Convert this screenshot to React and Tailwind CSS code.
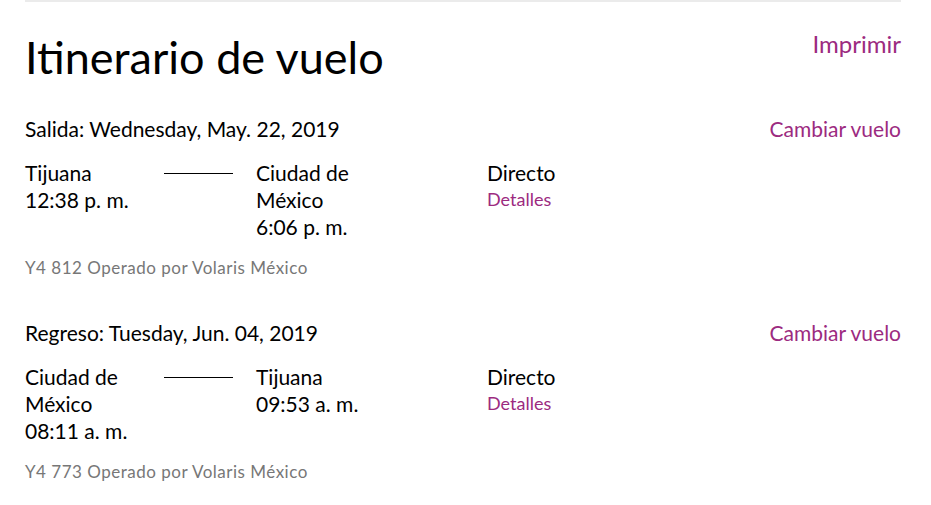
import React from "react";

function Leg({ label, date, from, fromTime, to, toTime, code }) {
  return (
    <div>
      <div className="flex items-baseline justify-between">
        <div className="text-[21px] leading-[27px] text-black">
          {label}: {date}
        </div>
        <a className="text-[21px] leading-[27px] text-[#9c2a80]">Cambiar vuelo</a>
      </div>
      <div className="mt-[17px] flex text-[21px] leading-[27px] text-black">
        <div className="flex w-[231px]">
          <div className="w-[139px] pr-[20px]">
            {from.map((l, i) => (
              <div key={i}>{l}</div>
            ))}
            <div>{fromTime}</div>
          </div>
          <div className="mt-[14px] h-px w-[69px] bg-black" />
        </div>
        <div className="w-[231px]">
          <div className="w-[120px]">
            {to.map((l, i) => (
              <div key={i}>{l}</div>
            ))}
            <div>{toTime}</div>
          </div>
        </div>
        <div>
          <div>Directo</div>
          <a className="block text-[18px] leading-[27px] text-[#9c2a80]">Detalles</a>
        </div>
      </div>
      <div className="mt-[18px] text-[17px] leading-[20px] tracking-[0.5px] text-[#777777]">{code}</div>
    </div>
  );
}

export default function App() {
  return (
    <div
      className="min-h-[505px] bg-white"
      style={{ fontFamily: "Lato, 'Noto Sans', sans-serif" }}
    >
      <div className="mx-[25px] w-[876px] border-t-2 border-[#ebebeb]">
        <div className="flex items-start justify-between pt-[27px]">
          <h1 className="text-[45px] leading-[56px] text-black">Itinerario de vuelo</h1>
          <a className="text-[24px] leading-[30px] text-[#9c2a80]">Imprimir</a>
        </div>
        <div className="mt-[30px]">
          <Leg
            label="Salida"
            date="Wednesday, May. 22, 2019"
            from={["Tijuana"]}
            fromTime="12:38 p. m."
            to={["Ciudad de", "México"]}
            toTime="6:06 p. m."
            code="Y4 812 Operado por Volaris México"
          />
        </div>
        <div className="mt-[41px]">
          <Leg
            label="Regreso"
            date="Tuesday, Jun. 04, 2019"
            from={["Ciudad de", "México"]}
            fromTime="08:11 a. m."
            to={["Tijuana"]}
            toTime="09:53 a. m."
            code="Y4 773 Operado por Volaris México"
          />
        </div>
      </div>
    </div>
  );
}
